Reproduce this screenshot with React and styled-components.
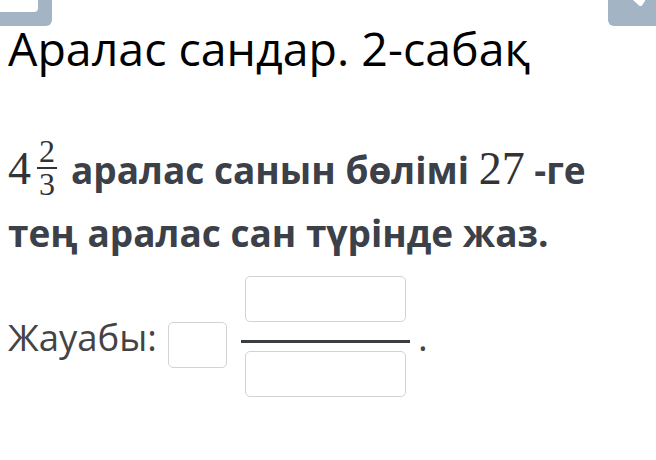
import React from "react";
import styled, { createGlobalStyle } from "styled-components";

const Global = createGlobalStyle`
  html, body { margin: 0; padding: 0; background: #fff; }
  body { font-family: "Open Sans", "Noto Sans", sans-serif; }
`;

const Page = styled.div`
  width: 656px;
  height: 460px;
  overflow: hidden;
  background: #fff;
`;

const TopBar = styled.div`
  display: flex;
  justify-content: space-between;
  align-items: flex-start;
  height: 25px;
`;

const LeftTab = styled.div`
  width: 52px;
  height: 26px;
  background: #a3b5c4;
  border-bottom-right-radius: 6px;
`;

const LeftInner = styled.div`
  width: 38px;
  height: 12px;
  background: #fff;
  border-bottom-right-radius: 4px;
`;

const RightTab = styled.div`
  width: 48px;
  height: 26px;
  background: #a3b5c4;
  border-bottom-left-radius: 6px;
  display: flex;
  justify-content: center;
`;

const Content = styled.div`
  padding: 0 8px;
`;

const Title = styled.h1`
  margin: 0;
  font-size: 46.5px;
  line-height: 46px;
  font-weight: 400;
  color: #000;
`;

const Question = styled.p`
  margin: 66px 0 0;
  font-size: 37px;
  line-height: 63px;
  font-weight: 700;
  color: #3b4049;
`;

const MathNum = styled.span`
  font-family: "Liberation Serif", "Times New Roman", serif;
  font-weight: 400;
  font-size: 46px;
  color: #333;
`;

const Frac = styled.span`
  display: inline-flex;
  flex-direction: column;
  align-items: center;
  vertical-align: 22px;
  margin: 0 14px 0 6px;
  font-family: "Liberation Serif", "Times New Roman", serif;
  font-weight: 400;
  font-size: 32px;
  color: #333;
`;

const FracPart = styled.span`
  line-height: 26px;
  padding: 0 2px;
`;

const FracBar = styled.span`
  align-self: stretch;
  height: 1.5px;
  background: #333;
  margin: 3px 0 2px;
`;

const AnswerRow = styled.div`
  display: flex;
  align-items: center;
  margin-top: 12px;
`;

const Label = styled.span`
  font-size: 36.5px;
  color: #444;
  margin-right: 11px;
`;

const InputBox = styled.div`
  box-sizing: border-box;
  width: ${(p) => p.$w}px;
  height: 46px;
  border: 1.5px solid #cfd4d8;
  border-radius: 5px;
  background: #fff;
`;

const SmallBox = styled(InputBox)`
  margin-top: 16px;
`;

const FracColumn = styled.div`
  display: flex;
  flex-direction: column;
  align-items: center;
  margin-left: 14px;
`;

const AnswerBar = styled.div`
  align-self: stretch;
  width: 169px;
  height: 3px;
  background: #3a3d42;
  margin: 18px 0 8px;
`;

const Period = styled.span`
  font-size: 37px;
  color: #444;
  margin-left: 8px;
`;

export default function App() {
  return (
    <Page>
      <Global />
      <TopBar>
        <LeftTab>
          <LeftInner />
        </LeftTab>
        <RightTab>
          <svg width="48" height="26" viewBox="0 0 48 26">
            <path d="M25 0 L31 5.5 Q32.5 6.5 34 5.5 L37 1 L37 0 Z" fill="#fff" />
          </svg>
        </RightTab>
      </TopBar>
      <Content>
        <Title>Аралас сандар. 2-сабақ</Title>
        <Question>
          <MathNum>4</MathNum>
          <Frac>
            <FracPart>2</FracPart>
            <FracBar />
            <FracPart>3</FracPart>
          </Frac>
          аралас санын бөлімі <MathNum>27</MathNum> -ге тең аралас сан түрінде жаз.
        </Question>
        <AnswerRow>
          <Label>Жауабы:</Label>
          <SmallBox $w={59} />
          <FracColumn>
            <InputBox $w={161} />
            <AnswerBar />
            <InputBox $w={161} />
          </FracColumn>
          <Period>.</Period>
        </AnswerRow>
      </Content>
    </Page>
  );
}
